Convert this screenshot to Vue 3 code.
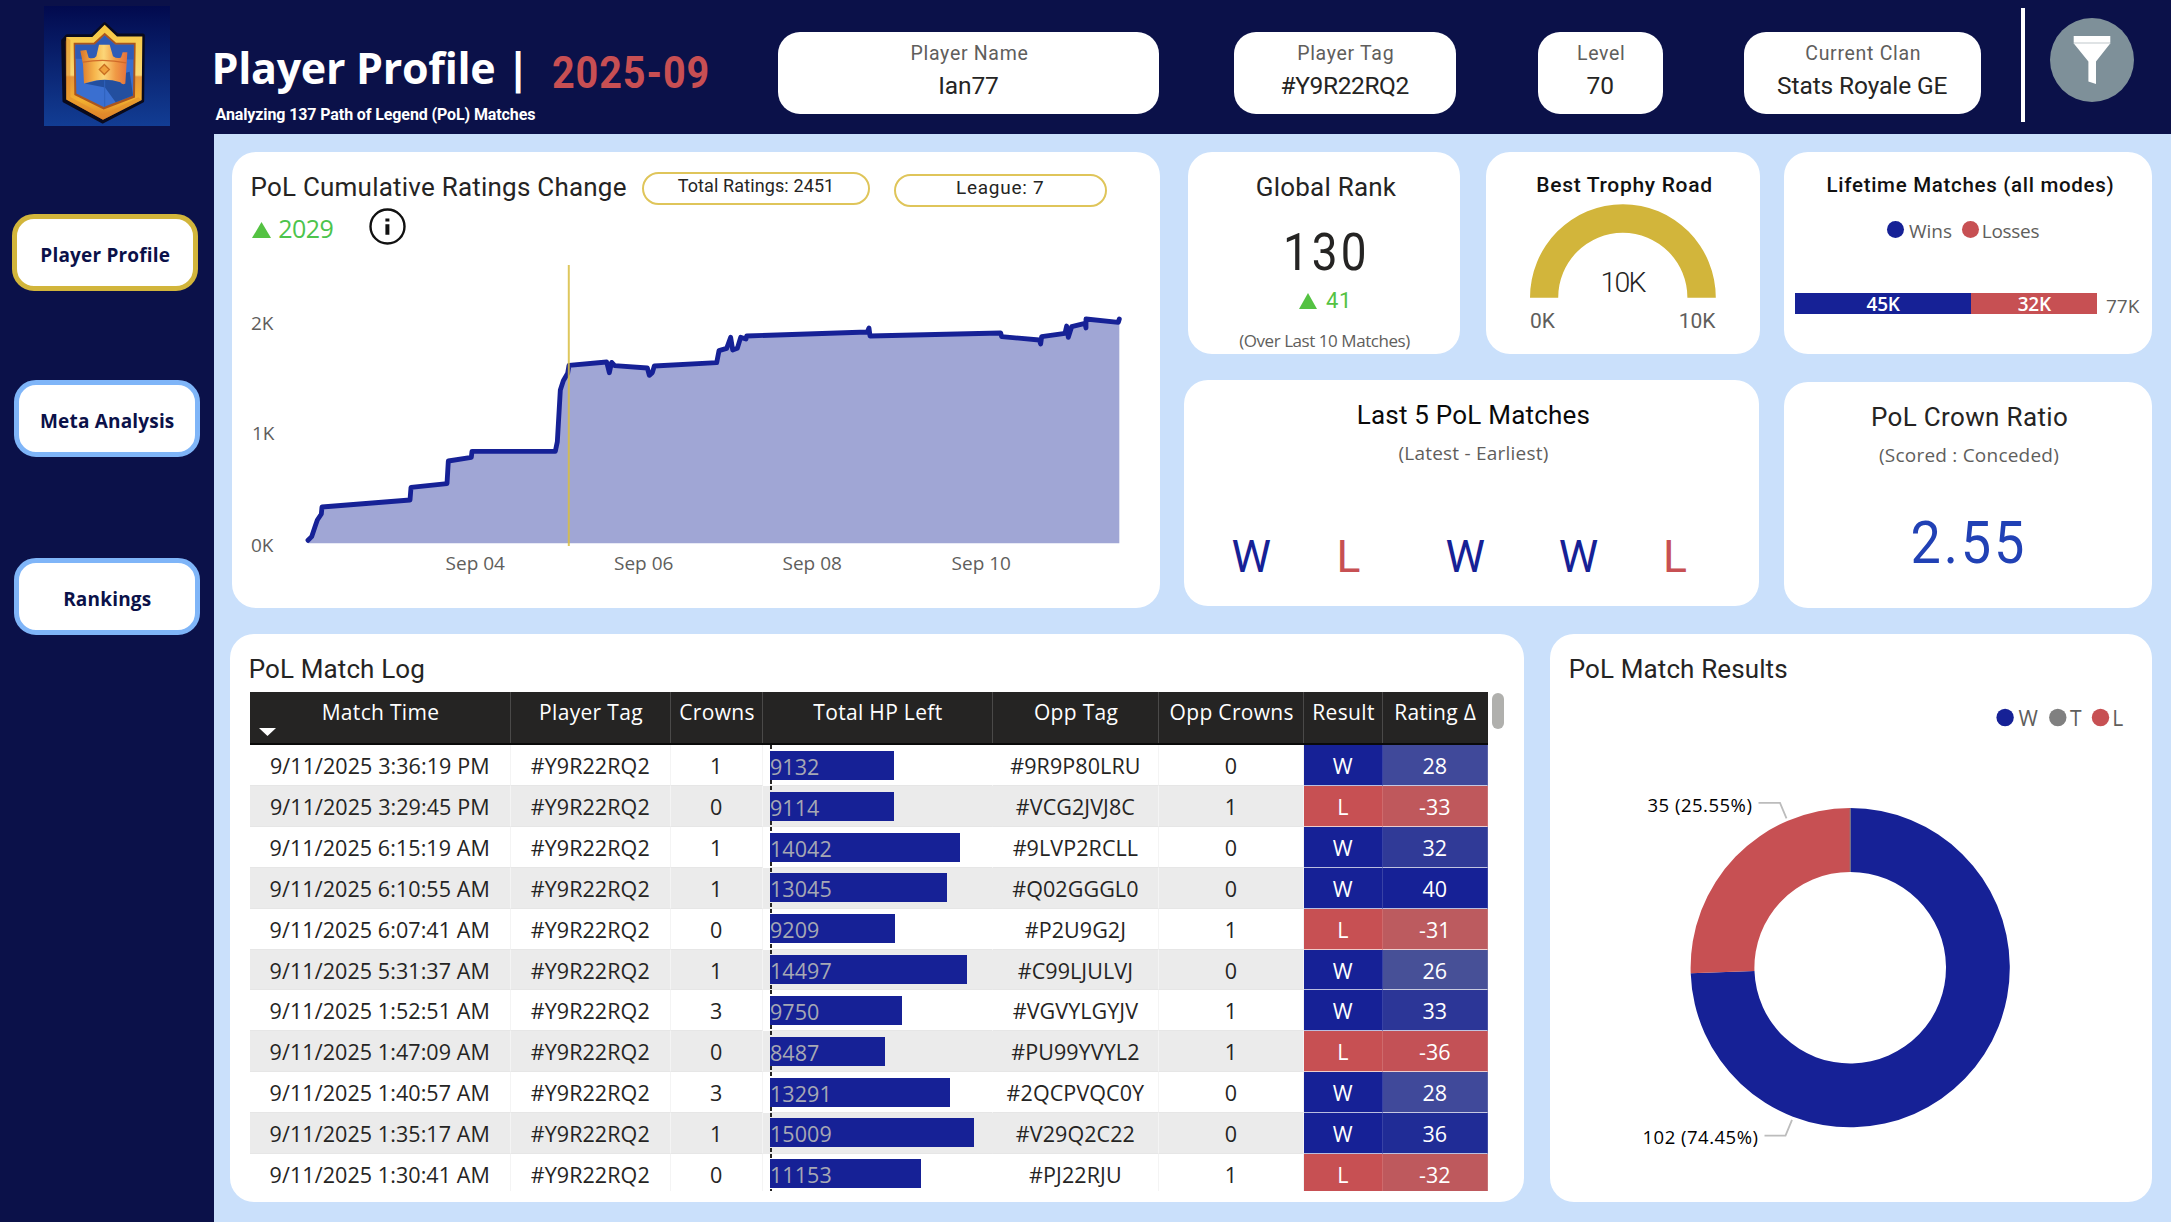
<script setup>
const nav = [
  { label: 'Player Profile', cls: 'nav-profile active' },
  { label: 'Meta Analysis', cls: 'nav-meta' },
  { label: 'Rankings', cls: 'nav-rankings' },
]

const facts = [
  { label: 'Player Name', value: 'Ian77', cls: 'fact-name' },
  { label: 'Player Tag', value: '#Y9R22RQ2', cls: 'fact-tag' },
  { label: 'Level', value: '70', cls: 'fact-level' },
  { label: 'Current Clan', value: 'Stats Royale GE', cls: 'fact-clan' },
]

const lastFive = ['W', 'L', 'W', 'W', 'L']

const columns = ['Match Time', 'Player Tag', 'Crowns', 'Total HP Left', 'Opp Tag', 'Opp Crowns', 'Result', 'Rating Δ']

const HP_SCALE = 0.01356
const matches = [
  ['9/11/2025 3:36:19 PM', 1, 9132, '#9R9P80LRU', 0, 'W', 28, '#40499a'],
  ['9/11/2025 3:29:45 PM', 0, 9114, '#VCG2JVJ8C', 1, 'L', -33, '#bf585c'],
  ['9/11/2025 6:15:19 AM', 1, 14042, '#9LVP2RCLL', 0, 'W', 32, '#303a97'],
  ['9/11/2025 6:10:55 AM', 1, 13045, '#Q02GGGL0', 0, 'W', 40, '#162196'],
  ['9/11/2025 6:07:41 AM', 0, 9209, '#P2U9G2J', 1, 'L', -31, '#bc5b5f'],
  ['9/11/2025 5:31:37 AM', 1, 14497, '#C99LJULVJ', 0, 'W', 26, '#475097'],
  ['9/11/2025 1:52:51 AM', 3, 9750, '#VGVYLGYJV', 1, 'W', 33, '#2c3697'],
  ['9/11/2025 1:47:09 AM', 0, 8487, '#PU99YVYL2', 1, 'L', -36, '#c35156'],
  ['9/11/2025 1:40:57 AM', 3, 13291, '#2QCPVQC0Y', 0, 'W', 28, '#40499a'],
  ['9/11/2025 1:35:17 AM', 1, 15009, '#V29Q2C22', 0, 'W', 36, '#202c96'],
  ['9/11/2025 1:30:41 AM', 0, 11153, '#PJ22RJU', 1, 'L', -32, '#be595d'],
].map(([time, crowns, hp, oppTag, oppCrowns, result, rating, tint]) => ({
  time, crowns, hp, oppTag, oppCrowns, result, rating, tint,
}))

const ratingLine =
  '264,1201 275,1190 285,1160 292,1140 304,1122 306,1101 570,1080 573,1042 681,1031 685,963 754,952 756,934 ' +
  '1006,934 1012,905 1021,750 1030,722 1043,700 1047,676 1160,666 1168,698 1175,667 1184,677 1282,684 1288,706 ' +
  '1297,698 1303,678 1490,668 1497,632 1520,625 1532,592 1538,630 1552,625 1562,592 1578,597 1580,588 1942,576 ' +
  '1947,564 1950,588 2342,579 2345,590 2458,600 2462,612 2465,590 2535,580 2540,558 2545,592 2555,560 2595,550 ' +
  '2598,564 2598,537 2695,547 2698,537'

// Donut geometry
const cx = 1850.7
const cy = 967.4
const R = 159.6
const r = 95.8
function slice(from, to) {
  const pt = (rad, f) => {
    const a = f * 2 * Math.PI
    return `${cx + rad * Math.sin(a)} ${cy - rad * Math.cos(a)}`
  }
  const large = to - from > 0.5 ? 1 : 0
  return `M${pt(R, from)}A${R} ${R} 0 ${large} 1 ${pt(R, to)}L${pt(r, to)}A${r} ${r} 0 ${large} 0 ${pt(r, from)}Z`
}
const winSlice = slice(0, 0.7445)
const lossSlice = slice(0.7445, 1)
</script>

<template>
  <div class="dash">
    <aside class="side">
      <svg class="logo" viewBox="43 18 378 359" preserveAspectRatio="none">
        <defs>
          <linearGradient id="sky" x1="0" y1="0" x2="0" y2="1">
            <stop offset="0" stop-color="#020a4e" />
            <stop offset="1" stop-color="#123d94" />
          </linearGradient>
          <linearGradient id="gold" x1="0" y1="0" x2="0" y2="1">
            <stop offset="0" stop-color="#f6c63f" />
            <stop offset="0.53" stop-color="#fbd873" />
            <stop offset="0.55" stop-color="#e8963a" />
            <stop offset="0.8" stop-color="#f3b02f" />
            <stop offset="1" stop-color="#d97a2a" />
          </linearGradient>
          <linearGradient id="crown" x1="0" y1="0" x2="1" y2="0">
            <stop offset="0" stop-color="#d9752a" />
            <stop offset="0.3" stop-color="#f6b54c" />
            <stop offset="0.5" stop-color="#fcd678" />
            <stop offset="0.75" stop-color="#f09a45" />
            <stop offset="1" stop-color="#e5703a" />
          </linearGradient>
        </defs>
        <rect x="43" y="18" width="378" height="359" fill="url(#sky)" />
        <path d="M225 72L262 106H340L338 302L219 364L104 302L100 122L112 108H188Z" fill="#3a1512" stroke="#0a0a1c" stroke-width="11" stroke-linejoin="round" />
        <path d="M225 74L262 109H338L336 299L220 358L110 298V111H188Z" fill="url(#gold)" />
        <path d="M110 111L122 120V290L220 343L326 291L336 299L220 358L110 298Z" fill="#e08a2c" opacity=".55" />
        <path d="M225 98L259 128H318L316 292L222 328L134 284L132 128H192Z" fill="#a9551f" />
        <path d="M225 106L257 134H312L310 286L222 320L140 280L137 134H195Z" fill="#3a6fd0" />
        <path d="M225 106L257 134H312V178L137 176V134H195Z" fill="#2f5cb6" />
        <path d="M165 250L225 236L300 215L310 286L258 306L226 262Z" fill="#234f9f" />
        <path d="M225 240V320" stroke="#2f62bd" stroke-width="3" />
        <path d="M152 152L170 150L177 173Q192 178 200 168L208 134H240L250 168Q262 177 274 172L279 156H293L287 250Q279 256 272 246Q225 232 177 246L163 250L160 192Z" fill="url(#crown)" />
        <path d="M160 186Q222 174 290 188" fill="none" stroke="#cf6a2a" stroke-width="4" />
        <path d="M224 193L239 208L224 223L209 208Z" fill="#f0a23c" stroke="#c96f22" stroke-width="4" />
      </svg>
      <button v-for="n in nav" :key="n.label" class="nav" :class="n.cls">{{ n.label }}</button>
    </aside>

    <div class="page">
      <header class="head">
        <div class="titles">
          <div class="title-row">
            <h1>Player Profile |</h1>
            <span class="period">2025-09</span>
          </div>
          <p class="subtitle">Analyzing 137 Path of Legend (PoL) Matches</p>
        </div>
        <div v-for="f in facts" :key="f.label" class="fact" :class="f.cls">
          <div class="fact-label">{{ f.label }}</div>
          <div class="fact-value">{{ f.value }}</div>
        </div>
        <div class="rule"></div>
        <svg class="filter" viewBox="0 0 84 84">
          <circle cx="42" cy="42" r="42" fill="#7e9099" />
          <path d="M23.7 18H60.3V24H23.7Z" fill="#fff" />
          <path d="M23.7 24H60.3V26H23.7Z" fill="#dfe3e5" />
          <path d="M24.2 26H59.8L46 43.5V66L38.4 63.5V43.5Z" fill="#fff" />
        </svg>
      </header>

      <main class="body">
        <div class="row-top">
          <section class="card ratings">
            <div class="ratings-head">
              <h2 class="h-ratings">PoL Cumulative Ratings Change</h2>
              <span class="chip chip-total">Total Ratings: 2451</span>
              <span class="chip chip-league">League: 7</span>
            </div>
            <div class="kpi">
              <svg class="kpi-up" viewBox="0 0 19 16"><path d="M9.5 0L19 16H0Z" fill="#54c242" /></svg>
              <span class="kpi-val">2029</span>
              <svg class="info" viewBox="0 0 37 37">
                <circle cx="18.5" cy="18.5" r="17" fill="none" stroke="#111" stroke-width="2.4" />
                <path d="M16.4 10.5h4v3h-4zM16.4 16.2h4v10.6h-4z" fill="#111" />
              </svg>
            </div>
            <svg class="area" viewBox="232 244 928 360">
              <g transform="translate(220 140) scale(.33333)">
                <polygon :points="`264,1210 ${ratingLine} 2698,1210`" fill="#a0a6d5" />
                <polyline :points="ratingLine" fill="none" stroke="#162196" stroke-width="14.5" stroke-linejoin="round" stroke-linecap="round" />
              </g>
              <path d="M568.8 265V546" stroke="#d8bd42" stroke-opacity=".85" stroke-width="2" />
              <g class="axis">
                <text x="251" y="330">2K</text>
                <text x="252" y="440">1K</text>
                <text x="251" y="552">0K</text>
                <g text-anchor="middle">
                  <text x="475.3" y="570">Sep 04</text>
                  <text x="643.7" y="570">Sep 06</text>
                  <text x="812.2" y="570">Sep 08</text>
                  <text x="981.3" y="570">Sep 10</text>
                </g>
              </g>
            </svg>
          </section>

          <div class="mid">
            <div class="mid-top">
              <section class="card rank">
                <h2>Global Rank</h2>
                <div class="rank-val">130</div>
                <div class="rank-delta">
                  <svg viewBox="0 0 18 16"><path d="M9 0L18 16H0Z" fill="#54c242" /></svg>41
                </div>
                <div class="rank-note">(Over Last 10 Matches)</div>
              </section>
              <section class="card trophy">
                <h3>Best Trophy Road</h3>
                <svg viewBox="1486 199 274 155">
                  <path d="M1530 297.7A92.9 93.5 0 0 1 1715.8 297.7H1687.4A64.6 65 0 0 0 1558.2 297.7Z" fill="#d2b53b" />
                  <text class="g-val" x="1622.5" y="292" text-anchor="middle">10K</text>
                  <text class="g-tick" x="1530" y="327.7">0K</text>
                  <text class="g-tick" x="1715.5" y="327.7" text-anchor="end">10K</text>
                </svg>
              </section>
            </div>
            <section class="card last5">
              <h2 class="black">Last 5 PoL Matches</h2>
              <div class="note">(Latest - Earliest)</div>
              <div class="letters">
                <span v-for="(l, i) in lastFive" :key="i" :class="l === 'W' ? 'win' : 'loss'">{{ l }}</span>
              </div>
            </section>
          </div>

          <div class="right">
            <section class="card lifetime">
              <h3>Lifetime Matches (all modes)</h3>
              <div class="legend">
                <i class="dot bg-win"></i><span>Wins</span>
                <i class="dot bg-loss"></i><span class="losses">Losses</span>
              </div>
              <div class="stack">
                <span class="seg seg-win">45K</span>
                <span class="seg seg-loss">32K</span>
                <span class="stack-total">77K</span>
              </div>
            </section>
            <section class="card crown">
              <h2>PoL Crown Ratio</h2>
              <div class="note">(Scored : Conceded)</div>
              <div class="crown-val">2.55</div>
            </section>
          </div>
        </div>

        <div class="row-bottom">
          <section class="card log">
            <h2 class="left">PoL Match Log</h2>
            <div class="log-wrap">
              <div class="table">
                <div class="tr th">
                  <div v-for="(c, i) in columns" :key="c" class="td">
                    {{ c }}
                    <svg v-if="i === 0" class="sort" viewBox="0 0 17 8"><path d="M0 0H17L8.5 8Z" fill="#fff" /></svg>
                  </div>
                </div>
                <div class="tbody">
                  <div v-for="m in matches" :key="m.time" class="tr">
                    <div class="td">{{ m.time }}</div>
                    <div class="td">#Y9R22RQ2</div>
                    <div class="td">{{ m.crowns }}</div>
                    <div class="td hp"><span class="bar" :style="{ width: m.hp * HP_SCALE + 'px' }">{{ m.hp }}</span></div>
                    <div class="td">{{ m.oppTag }}</div>
                    <div class="td">{{ m.oppCrowns }}</div>
                    <div class="td res" :class="m.result === 'W' ? 'bg-win' : 'bg-loss'">{{ m.result }}</div>
                    <div class="td res" :style="{ background: m.tint }">{{ m.rating }}</div>
                  </div>
                </div>
              </div>
              <div class="thumb"></div>
            </div>
          </section>

          <section class="card results">
            <h2 class="left">PoL Match Results</h2>
            <svg viewBox="1550.5 684.7 601.5 516">
              <g class="key">
                <circle cx="2005.6" cy="717.2" r="8.7" fill="#162196" />
                <text x="2019" y="725.5">W</text>
                <circle cx="2058.3" cy="717.2" r="8.7" fill="#808080" />
                <text x="2070.5" y="725.5">T</text>
                <circle cx="2101" cy="717.2" r="8.7" fill="#c75053" />
                <text x="2112.8" y="725.5">L</text>
              </g>
              <path :d="winSlice" fill="#162196" />
              <path :d="lossSlice" fill="#c75053" />
              <path d="M1850.7 808V871.5" stroke="#808080" stroke-width="1" />
              <g fill="none" stroke="#bcbcbc" stroke-width="1.8">
                <path d="M1759 802.5H1780.5L1787 818" />
                <path d="M1765 1135.3H1786L1792.5 1119.5" />
              </g>
              <g class="dlabel">
                <text x="1648" y="812">35 (25.55%)</text>
                <text x="1643" y="1144">102 (74.45%)</text>
              </g>
            </svg>
          </section>
        </div>
      </main>
    </div>
  </div>
</template>

<style>
body {
  background: #cae0fb;
}
</style>

<style scoped>
* {
  box-sizing: border-box;
}
h1, h2, h3, p {
  margin: 0;
}
svg {
  display: block;
}
.dash {
  display: flex;
  width: 2171px;
  height: 1222px;
  overflow: hidden;
  background: #cae0fb;
  font-family: "Open Sans", "Noto Sans", sans-serif;
  color: #252423;
}

/* sidebar */
.side {
  display: flex;
  flex-direction: column;
  flex: none;
  width: 213.5px;
  padding-top: 6px;
  background: #0b1149;
}
.logo {
  width: 126px;
  height: 120px;
  margin-left: 44px;
}
.nav {
  width: 185.5px;
  height: 76.5px;
  margin-left: 14px;
  padding: 5px 0 0 1px;
  border: 5px solid #7fb5f8;
  border-radius: 22px;
  background: #fff;
  color: #0b1149;
  font: 700 19px "Open Sans", sans-serif;
  letter-spacing: .18px;
}
.nav-profile {
  margin: 88px 0 0 12px;
}
.nav-meta {
  margin-top: 89.5px;
}
.nav-rankings {
  margin-top: 101.5px;
}
.active {
  border-color: #d2b53b;
}

/* header */
.page {
  flex: 1;
  min-width: 0;
}
.head {
  display: flex;
  align-items: flex-start;
  height: 134px;
  background: #0b1149;
}
.titles {
  width: 564.5px;
  padding-top: 37.6px;
}
.title-row {
  display: flex;
  height: 67.2px;
  margin-left: -2px;
}
h1 {
  width: 340.5px;
  color: #fff;
  font-size: 43px;
  font-weight: 700;
  line-height: 60px;
  letter-spacing: -.3px;
  white-space: nowrap;
}
.period {
  margin-top: 5px;
  color: #c84f53;
  font: 700 44px/60px Roboto, sans-serif;
  letter-spacing: 1px;
  transform: scaleX(.9);
  transform-origin: left;
}
.subtitle {
  padding-left: 2px;
  color: #fff;
  font: 700 16px/20px Roboto, sans-serif;
  letter-spacing: -.11px;
  white-space: nowrap;
}
.fact {
  height: 82px;
  margin-top: 32px;
  padding-top: 9.6px;
  border-radius: 22px;
  background: #fff;
  font-family: Roboto, sans-serif;
  text-align: center;
}
.fact-name { width: 381px; }
.fact-tag { width: 221.5px; margin-left: 75px; }
.fact-level { width: 124.5px; margin-left: 82.5px; }
.fact-clan { width: 236.5px; margin-left: 81.5px; }
.fact-label {
  padding-left: 2px;
  color: #605e5c;
  font-size: 19.5px;
  line-height: 24px;
  letter-spacing: .7px;
}
.fact-value {
  margin-top: 5px;
  font-size: 24.5px;
  line-height: 30px;
  letter-spacing: -.1px;
}
.fact-tag .fact-value {
  letter-spacing: -.39px;
}
.rule {
  width: 4px;
  height: 114px;
  margin: 8px 0 0 40.5px;
  background: #fff;
}
.filter {
  width: 84px;
  height: 84px;
  margin: 18px 0 0 24.5px;
}

/* cards */
.body {
  padding: 18px 19px 0 0;
}
.card {
  border-radius: 24px;
  background: #fff;
  overflow: hidden;
}
h2 {
  font: 400 26px/32px Roboto, sans-serif;
  letter-spacing: .22px;
  text-align: center;
}
h3 {
  color: #111;
  font: 500 21px/28px Roboto, sans-serif;
  letter-spacing: .69px;
  text-align: center;
}
.left {
  padding: 18.7px 0 0 18.7px;
  text-align: left;
  letter-spacing: .12px;
}
.black {
  color: #0a0a0a;
}
.note {
  color: #605e5c;
  font-size: 19px;
  line-height: 26px;
  letter-spacing: .22px;
  text-align: center;
}
.row-top {
  display: flex;
  height: 456px;
  padding-left: 18.5px;
}

/* ratings */
.ratings {
  width: 928px;
  height: 456px;
}
.ratings-head {
  display: flex;
  height: 56px;
  padding: 19px 0 0 18.5px;
}
.h-ratings {
  width: 391.5px;
  text-align: left;
  letter-spacing: .22px;
  white-space: nowrap;
}
.chip {
  height: 32.5px;
  border: 2px solid #dfc55a;
  border-radius: 17px;
  font-family: Roboto, sans-serif;
  text-align: center;
}
.chip-total {
  width: 228px;
  margin-top: 1px;
  font-size: 18px;
  line-height: 24px;
  letter-spacing: .12px;
}
.chip-league {
  width: 212.5px;
  margin: 3px 0 0 24px;
  font-size: 19px;
  line-height: 23px;
  letter-spacing: .73px;
}
.kpi {
  display: flex;
  height: 36px;
  padding-left: 19.7px;
}
.kpi-up {
  width: 19px;
  height: 16px;
  margin-top: 14px;
}
.kpi-val {
  width: 98px;
  margin-left: 7.5px;
  padding-top: 2px;
  color: #4cc44c;
  font-size: 25px;
  line-height: 36px;
  letter-spacing: -.5px;
}
.info {
  width: 37px;
  height: 37px;
  margin-left: -7.5px;
}
.area {
  width: 928px;
  height: 360px;
}
.axis text {
  fill: #605e5c;
  font-size: 19px;
}

/* middle column */
.mid {
  width: 576px;
  margin-left: 24px;
}
.mid-top {
  display: flex;
  gap: 26px;
  padding-left: 4px;
}
.rank {
  width: 272px;
  height: 202px;
  padding-top: 19px;
  text-align: center;
}
.rank h2 {
  padding-left: 4px;
}
.rank-val {
  margin-top: 19.6px;
  padding-left: 5px;
  font: 400 51px/60px Roboto, sans-serif;
  letter-spacing: 3.4px;
  transform: scaleX(.9);
}
.rank-delta {
  display: flex;
  justify-content: center;
  align-items: center;
  gap: 9px;
  margin-top: 4px;
  padding-left: 3px;
  color: #54c242;
  font: 400 22px/28px Roboto, sans-serif;
  letter-spacing: .6px;
}
.rank-delta svg {
  width: 18px;
  height: 16px;
}
.rank-note {
  margin-top: 14px;
  padding-left: 1px;
  color: #605e5c;
  font-size: 17px;
  line-height: 24px;
  letter-spacing: -.45px;
}
.trophy {
  width: 274px;
  height: 202px;
  padding-top: 19px;
}
.trophy h3 {
  padding-left: 3px;
}
.trophy svg {
  width: 274px;
  height: 155px;
}
.g-val {
  fill: #252423;
  font: 300 28.5px Roboto, sans-serif;
  letter-spacing: -1.8px;
}
.g-tick {
  fill: #605e5c;
  font: 400 21px Roboto, sans-serif;
}
.last5 {
  width: 575px;
  height: 226px;
  margin-top: 26px;
  padding-top: 19px;
}
.last5 .note {
  margin-top: 9.3px;
}
.last5 h2,
.last5 .note {
  padding-left: 4px;
}
.letters {
  display: grid;
  grid-template-columns: 103.4px 91.2px 142.2px 84.4px 108.6px;
  margin-top: 64.4px;
  padding-left: 15.5px;
  font: 400 44.5px/52px Roboto, sans-serif;
  text-align: center;
}
.win { color: #162196; }
.loss { color: #c75053; }
.bg-win { background: #162196; }
.bg-loss { background: #c75053; }

/* right column */
.right {
  width: 368px;
  margin-left: 24px;
}
.lifetime {
  height: 202px;
  padding-top: 19px;
}
.lifetime h3 {
  padding-left: 5px;
  font-size: 20.5px;
  letter-spacing: .7px;
}
.legend {
  display: flex;
  align-items: center;
  margin-top: 18.6px;
  padding-left: 103px;
  color: #605e5c;
  font-size: 19px;
  line-height: 26px;
}
.dot {
  width: 17.4px;
  height: 17.4px;
  margin: -2px 4.5px 0 0;
  border-radius: 50%;
}
.legend .bg-loss {
  margin-left: 10px;
  margin-right: 2.5px;
}
.losses {
  letter-spacing: -.3px;
}
.stack {
  display: flex;
  height: 20.7px;
  margin-top: 49.7px;
  padding-left: 10.7px;
  font-size: 19px;
  line-height: 20.7px;
}
.seg {
  height: 20.7px;
  padding-top: 1px;
  color: #fff;
  font-weight: 600;
  text-align: center;
  letter-spacing: -.3px;
}
.seg-win { width: 176.8px; background: #162196; }
.seg-loss { width: 125.5px; background: #c75053; }
.stack-total {
  margin: 3px 0 0 9px;
  color: #605e5c;
}
.crown {
  height: 225.4px;
  margin-top: 28.3px;
  padding-top: 18.8px;
}
.crown h2 {
  padding-left: 3px;
  letter-spacing: .35px;
}
.crown .note {
  margin-top: 8.5px;
  padding-left: 2px;
}
.crown-val {
  margin-top: 39.6px;
  padding-left: 2px;
  color: #2141b5;
  font: 400 60px/72px Roboto, sans-serif;
  letter-spacing: 3.2px;
  text-align: center;
  transform: scaleX(.9);
}

/* bottom row */
.row-bottom {
  display: flex;
  gap: 26px;
  height: 567.5px;
  margin-top: 26px;
  padding-left: 16.5px;
}
.log {
  width: 1294px;
}
.log-wrap {
  display: flex;
  margin-top: 7.3px;
  padding-left: 20px;
}
.table {
  width: 1238px;
}
.tr {
  display: grid;
  grid-template-columns: 260.5px 160.5px 91.5px 230.3px 166.2px 145px 78.6px 105.4px;
  height: 40.84px;
  line-height: 42px;
  font-size: 21.5px;
  letter-spacing: .08px;
  text-align: center;
}
.tbody {
  height: 445.5px;
  overflow: hidden;
}
.tbody .tr:nth-child(even) {
  background: #ebebeb;
}
.tbody .td {
  height: 40.84px;
  border-right: 1px solid #f4f4f4;
  border-bottom: 1px solid #e6e6e6;
  white-space: nowrap;
}
.tbody .hp {
  display: flex;
  align-items: center;
  margin-left: 7.5px;
  border-right-color: transparent;
  background: linear-gradient(#252423 60%, transparent 60%) 0 0 / 1.5px 7px repeat-y;
}
.bar {
  height: 29px;
  background: #162196;
  color: #a6a8b4;
  line-height: 31px;
  text-align: left;
}
.tbody .res {
  border-right: 1px solid rgba(255, 255, 255, .15);
  border-bottom: 1.5px solid rgba(255, 255, 255, .7);
  color: #fff;
}
.th {
  height: 53.5px;
  border-bottom: 2px solid #0a0a0a;
  background: #252423;
  color: #fff;
  font-size: 21px;
  line-height: 30px;
  letter-spacing: .32px;
}
.th .td {
  position: relative;
  padding: 5px 0 0 1.5px;
  border-right: 1.5px solid #4a4948;
  white-space: nowrap;
}
.th .td:last-child {
  padding-left: 0;
  border-right: 0;
}
.sort {
  position: absolute;
  left: 9px;
  top: 36px;
  width: 17px;
  height: 8px;
}
.thumb {
  width: 12px;
  height: 36px;
  margin: 1.5px 0 0 3.5px;
  border-radius: 6px;
  background: #b0b0ad;
}
.results {
  width: 601.5px;
}
.results svg {
  width: 601.5px;
  height: 516px;
}
.key text {
  fill: #605e5c;
  font-size: 21px;
}
.dlabel text {
  fill: #000;
  font-size: 18.5px;
  letter-spacing: .5px;
}
</style>
